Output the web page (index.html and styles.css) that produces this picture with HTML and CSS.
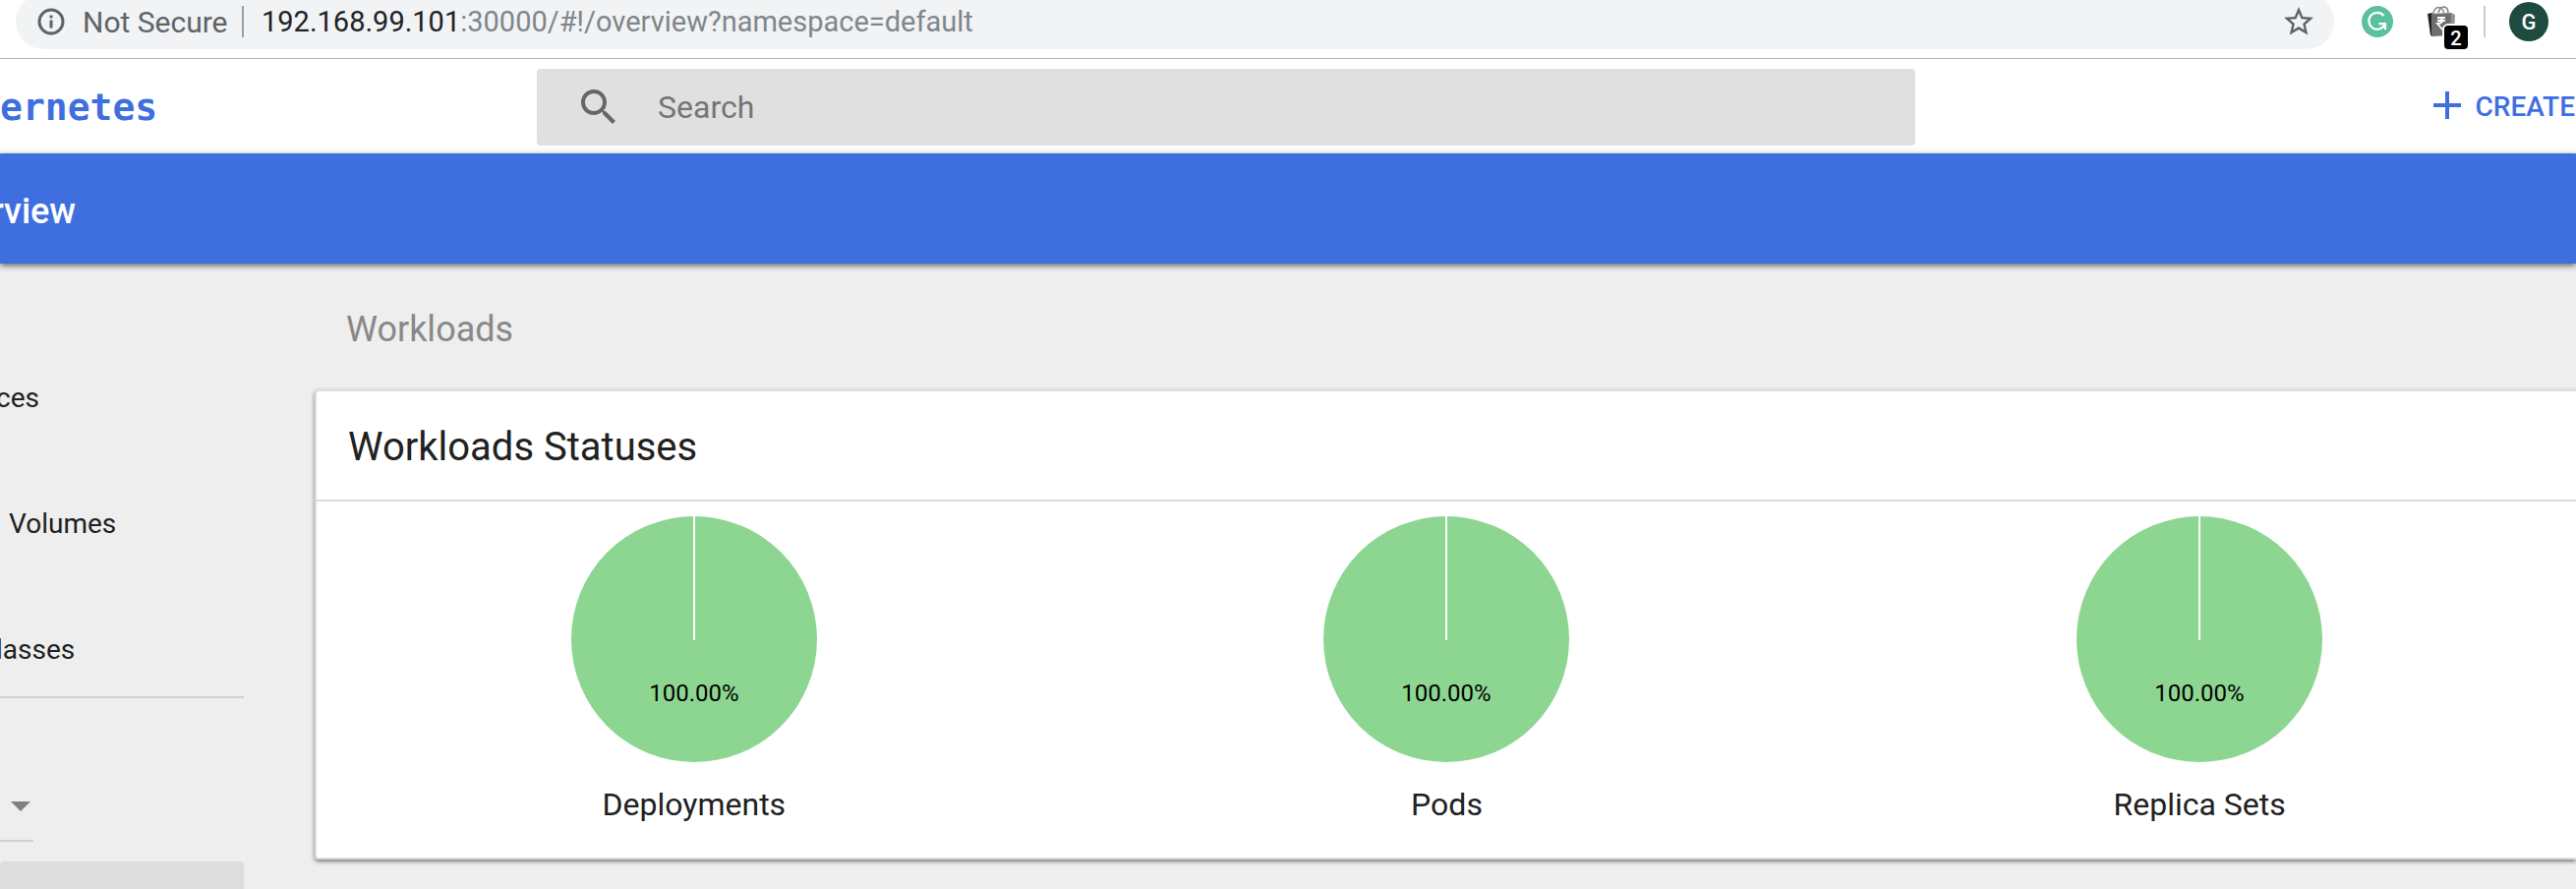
FILE: index.html
```
<!DOCTYPE html>
<html lang="en">
<head>
<meta charset="utf-8">
<title>Kubernetes Dashboard</title>
<link rel="stylesheet" href="styles.css">
</head>
<body>
<div class="browser">
  <div class="omnibox">
    <svg class="info" viewBox="0 0 28 28" aria-hidden="true"><circle cx="14" cy="14" r="12" fill="none" stroke="currentColor" stroke-width="3"/><path d="M12.5 7.500h3v3h-3zM12.500 12.500h3v8h-3z" fill="currentColor"/></svg>
    <span class="secure">Not Secure</span>
    <span class="rule"></span>
    <span class="url"><b class="host">192.168.99.101</b>:30000/#!/overview?namespace=default</span>
    <button class="star" aria-label="Bookmark this page"><svg viewBox="0 0 24 24"><path fill="currentColor" d="M22 9.240l-7.190-.62L12 2 9.190 8.630 2 9.240l5.460 4.730L5.820 21 12 17.270 18.180 21l-1.630-7.030L22 9.240zM12 15.400l-3.760 2.270 1-4.280-3.320-2.880 4.380-.38L12 6.100l1.710 4.040 4.380.38-3.320 2.880 1 4.280L12 15.400z"/></svg></button>
  </div>
  <div class="extensions">
    <button class="ext" aria-label="Grammarly"><svg viewBox="0 0 32 32"><circle cx="16" cy="16" r="16" fill="#5bc19c"/><path d="M22.500 10A8.500 8.500 0 1 0 23.500 19M17.500 18.200h6.500v6" fill="none" stroke="#fff" stroke-width="2.200"/></svg></button>
    <button class="ext" aria-label="Shopping">
      <svg viewBox="0 0 32 32"><path d="M1 8l5-1 1 24-3-1z" fill="#222"/><path d="M5 8l21-1-1 23-20 1z" fill="#6e6e6e"/><path d="M25 7l4 2-1 21-4-1z" fill="#929292"/><path d="M7 9c0-10 10-10 11 0M12 7c2-8 10-8 10 1" fill="none" stroke="#8c8c8c" stroke-width="1.600"/><path d="M11 12h8M11 15h8M12 12c6 0 5 6-1 6l6 7" fill="none" stroke="#fff" stroke-width="1.800"/></svg>
      <span class="badge">2</span>
    </button>
    <span class="rule light"></span>
    <button class="avatar">G</button>
  </div>
</div>

<header class="topbar">
  <a class="brand" href="#">ernetes</a>
  <label class="search">
    <svg viewBox="0 0 24 24" aria-hidden="true"><path fill="currentColor" d="M15.500 14h-.79l-.28-.27C15.410 12.590 16 11.110 16 9.500 16 5.910 13.090 3 9.500 3S3 5.910 3 9.500 5.910 16 9.500 16c1.610 0 3.090-.59 4.230-1.570l.27.28v.79l5 4.990L20.490 19l-4.990-5zm-6 0C7.010 14 5 11.990 5 9.500S7.010 5 9.500 5 14 7.010 14 9.500 11.990 14 9.500 14z"/></svg>
    <input type="search" placeholder="Search" aria-label="Search">
  </label>
  <div class="actions">
    <button class="create"><svg viewBox="0 0 28 28" aria-hidden="true"><path d="M14 0v28M0 14h28" stroke="currentColor" stroke-width="4"/></svg>CREATE</button>
  </div>
</header>

<div class="titlebar"><h1>rview</h1></div>

<div class="page">
  <nav class="sidebar">
    <a class="item" href="#">ces</a>
    <a class="item spaced" href="#">Volumes</a>
    <a class="item" href="#">lasses</a>
    <hr>
    <div class="namespace">
      <select aria-label="Namespace"><option></option></select>
      <svg viewBox="0 0 20 10" aria-hidden="true"><path d="M0 0h20L10 10z" fill="#808080"/></svg>
    </div>
    <a class="current" href="#" aria-label="Overview"></a>
  </nav>
  <main class="content">
    <h2>Workloads</h2>
    <section class="card">
      <h3>Workloads Statuses</h3>
      <div class="charts">
        <figure>
          <svg class="pie" viewBox="0 0 250 250"><circle cx="125" cy="125" r="125" fill="#8dd691"/><path d="M125 0v126" stroke="#fff" stroke-width="2"/><text x="125" y="188">100.00%</text></svg>
          <figcaption>Deployments</figcaption>
        </figure>
        <figure>
          <svg class="pie" viewBox="0 0 250 250"><circle cx="125" cy="125" r="125" fill="#8dd691"/><path d="M125 0v126" stroke="#fff" stroke-width="2"/><text x="125" y="188">100.00%</text></svg>
          <figcaption>Pods</figcaption>
        </figure>
        <figure>
          <svg class="pie" viewBox="0 0 250 250"><circle cx="125" cy="125" r="125" fill="#8dd691"/><path d="M125 0v126" stroke="#fff" stroke-width="2"/><text x="125" y="188">100.00%</text></svg>
          <figcaption>Replica Sets</figcaption>
        </figure>
      </div>
    </section>
  </main>
</div>
</body>
</html>
```
FILE: styles.css
```
* { box-sizing: border-box; }
body {
  margin: 0;
  min-height: 100vh;
  display: flex;
  flex-direction: column;
  overflow: hidden;
  background: #eee;
  color: #212121;
  font-family: Roboto, sans-serif;
}
button { padding: 0; border: 0; background: none; font: inherit; color: inherit; }
a { color: inherit; text-decoration: none; }
svg { display: block; }

.browser {
  display: flex;
  height: 60px;
  padding-left: 16px;
  background: #fff;
  border-bottom: 1px solid #b0b0b0;
}
.omnibox {
  flex: 1;
  display: flex;
  align-items: center;
  height: 56px;
  margin-top: -6px;
  padding: 0 18px 0 22px;
  border-radius: 28px;
  background: #f1f3f4;
  color: #5f6368;
}
.info { width: 28px; height: 28px; margin-right: 18px; }
.secure { width: 162px; font-size: 30px; }
.rule { width: 2px; height: 32px; background: #9aa0a6; }
.rule.light { background: #ccc; }
.url { flex: 1; margin-left: 18px; color: #80868b; font-size: 29px; }
.host { font-weight: 400; color: #202124; }
.star svg { width: 36px; height: 36px; }
.extensions {
  display: flex;
  align-items: center;
  height: 44px;
  padding: 0 28px;
}
.ext { position: relative; margin-right: 34px; }
.ext + .ext { margin-right: 26px; }
.ext svg { width: 32px; height: 32px; }
.badge {
  position: absolute;
  left: 16px;
  top: 18px;
  width: 28px;
  height: 28px;
  border: 2px solid #fff;
  border-radius: 6px;
  background: #000;
  color: #fff;
  font-size: 20px;
  font-weight: 500;
  line-height: 26px;
}
.avatar {
  width: 40px;
  height: 40px;
  margin-left: 24px;
  border-radius: 50%;
  background: #1e4b3f;
  color: #fff;
  font-size: 22px;
  font-weight: 500;
}

.topbar {
  display: grid;
  grid-template-columns: 546px 1fr 672px;
  align-items: center;
  height: 96px;
  background: #fff;
}
.brand {
  padding-top: 2px;
  color: #3f6fdf;
  font: bold 38px "DejaVu Sans Mono", monospace;
}
.search {
  display: flex;
  align-items: center;
  height: 78px;
  margin-top: 2px;
  padding-left: 39px;
  border-radius: 4px;
  background: #e0e0e0;
  color: #666;
}
.search svg { width: 48px; height: 48px; }
.search input {
  flex: 1;
  margin-left: 36px;
  padding: 0;
  border: 0;
  outline: 0;
  background: none;
  font: 32px Roboto, sans-serif;
}
.search input::placeholder { color: #757575; }
.actions { display: flex; justify-content: flex-end; color: #3f6fdf; }
.create { display: flex; align-items: center; padding-right: 1px; font-size: 28px; font-weight: 500; }
.create svg { width: 28px; height: 28px; margin: 0 15px 2px 0; }

.titlebar {
  display: flex;
  align-items: center;
  height: 112px;
  padding-top: 6px;
  background: #3f6fdf;
  box-shadow: 0 2px 6px rgba(0, 0, 0, .6);
  color: #fff;
}
.titlebar h1 { margin: 0 0 0 -9px; font-size: 36px; font-weight: 500; }

.page {
  flex: 1;
  display: grid;
  grid-template-columns: 248px 1fr;
  column-gap: 72px;
}
.sidebar { display: flex; flex-direction: column; padding-top: 73px; }
.item { height: 128px; margin-left: -4px; line-height: 128px; font-size: 28px; }
.spaced { padding-left: 13px; }
.sidebar hr { width: 100%; height: 2px; margin: -17px 0 0; border: 0; background: #d0d0d0; }
.namespace { display: grid; align-items: center; width: 34px; margin: 64px 0 20px; }
.namespace > * { grid-area: 1 / 1; }
.namespace select {
  appearance: none;
  width: 34px;
  height: 82px;
  border: 0;
  border-bottom: 2px solid #d0d0d0;
  background: none;
}
.namespace svg { width: 20px; height: 10px; margin: 10px 0 0 11px; }
.current { flex: 1; border-radius: 4px 4px 0 0; background: #ddd; }

.content h2 {
  margin: 0;
  padding: 6px 0 0 32px;
  color: #888;
  font-size: 36px;
  font-weight: 400;
  line-height: 122px;
}
.card {
  border: 2px solid #ddd;
  border-right: 0;
  border-radius: 4px 0 0 4px;
  background: #fff;
  box-shadow: 0 2px 4px rgba(0, 0, 0, .5);
}
.card h3 {
  margin: 0;
  padding: 4px 0 0 32px;
  border-bottom: 2px solid #ddd;
  font-size: 40px;
  font-weight: 400;
  line-height: 106px;
}
.charts { display: grid; grid-template-columns: repeat(3, 1fr); padding: 15px 0 32px 1px; }
.charts figure { display: flex; flex-direction: column; align-items: center; margin: 0; }
.pie { width: 250px; height: 250px; }
.pie text { font-size: 24px; text-anchor: middle; fill: #000; }
.charts figcaption { margin-top: 21px; font-size: 32px; line-height: 44px; }
```
